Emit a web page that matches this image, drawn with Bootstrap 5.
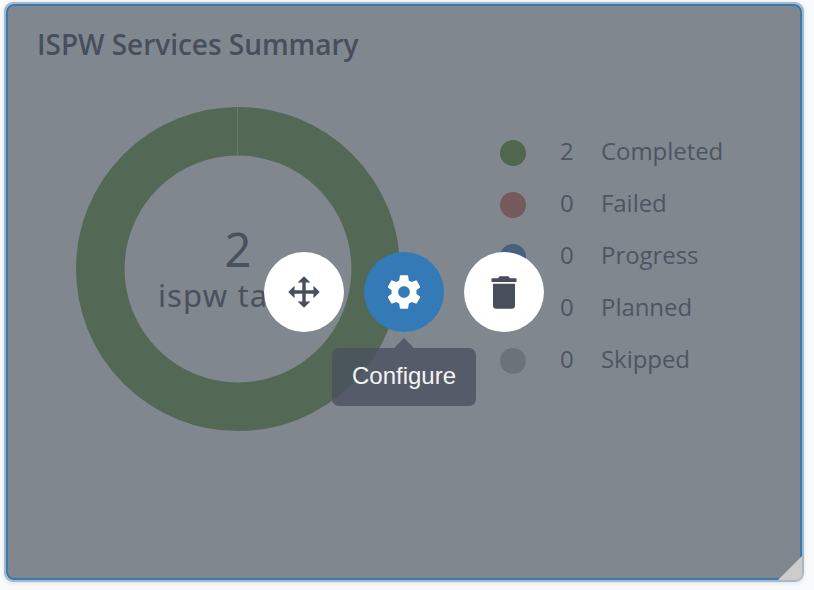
<!DOCTYPE html>
<html lang="en">
<head>
<meta charset="utf-8">
<meta name="viewport" content="width=device-width, initial-scale=1">
<title>ISPW Services Summary</title>
<link href="https://cdn.jsdelivr.net/npm/bootstrap@5.3.0/dist/css/bootstrap.min.css" rel="stylesheet">
<style>
body{background:#f8fafc;font-family:"Open Sans",sans-serif;color:#4e5562;height:590px;overflow:hidden}
.widget{width:800px;height:580px;margin:2px 0 0 4px;border:2px solid #aab7c2;border-radius:9px;background:#d5dce3;box-shadow:0 1px 4px rgba(60,80,100,.15)}
.widget-inner{height:576px;border:2px solid #337ab7;border-radius:8px;background:#81878f}
.widget-title{font-size:28px;font-weight:600;line-height:38px;letter-spacing:-.03px;color:#484e5b;padding:19px 0 0 29px}
.chart{width:324px;height:324px;margin:44px 0 0 68px}
.chart-text{padding-bottom:4px}
.chart-number{font-family:"Noto Sans",sans-serif;font-size:47px;line-height:56px;color:#4a505d}
.chart-label{font-family:"Noto Sans",sans-serif;font-size:31px;line-height:36px;letter-spacing:1.15px;color:#4a505d}
.legend-list{margin:62px 0 0 100px;font-size:24px}
.legend-item{height:52px}
.dot{width:26px;height:26px;margin-top:4px}
.count{width:14px;margin-left:34px}
.label{margin-left:27px;letter-spacing:-.05px}
.actions{left:258px;top:248px;gap:20px}
.action{width:80px;height:80px;background:#fff;color:#484e5b}
.action.primary{background:#337ab7;color:#fff}
.tip{left:326px;top:334px;width:144px}
.tip-arrow{width:20px;height:10px;background:rgba(74,80,94,.8);clip-path:polygon(50% 0,100% 100%,0 100%)}
.tip-body{width:144px;height:58px;border-radius:7px;background:rgba(74,80,94,.8);color:#f4f4f5;font:24px/56px "Liberation Sans",Arial,sans-serif}
.grip{right:0;bottom:0;width:24px;height:24px;background:#ccc;clip-path:polygon(100% 0,100% 100%,0 100%);border-bottom-right-radius:6px}
</style>
</head>
<body>
<div class="widget position-relative">
  <div class="widget-inner">
    <h1 class="widget-title m-0">ISPW Services Summary</h1>
    <div class="d-flex">
      <div class="chart position-relative flex-shrink-0">
        <svg class="d-block" width="324" height="324" viewBox="0 0 324 324">
          <circle cx="162" cy="162" r="137.7" fill="none" stroke="#536956" stroke-width="48.6"/>
          <path d="M161.5 0v48.6" stroke="#6b7a70" stroke-width="1"/>
        </svg>
        <div class="chart-text position-absolute top-0 start-0 w-100 h-100 d-flex flex-column align-items-center justify-content-center text-nowrap">
          <div class="chart-number">2</div>
          <div class="chart-label">ispw tasks</div>
        </div>
      </div>
      <div class="legend-list">
        <div class="legend-item d-flex align-items-center"><span class="dot rounded-circle" style="background:#50674d"></span><span class="count">2</span><span class="label">Completed</span></div>
        <div class="legend-item d-flex align-items-center"><span class="dot rounded-circle" style="background:#76595c"></span><span class="count">0</span><span class="label">Failed</span></div>
        <div class="legend-item d-flex align-items-center"><span class="dot rounded-circle" style="background:#466080"></span><span class="count">0</span><span class="label">Progress</span></div>
        <div class="legend-item d-flex align-items-center"><span class="dot rounded-circle" style="background:#858a90"></span><span class="count">0</span><span class="label">Planned</span></div>
        <div class="legend-item d-flex align-items-center"><span class="dot rounded-circle" style="background:#6c7279"></span><span class="count">0</span><span class="label">Skipped</span></div>
      </div>
    </div>
  </div>
  <div class="actions position-absolute d-flex">
    <button class="action border-0 p-0 rounded-circle d-flex align-items-center justify-content-center" aria-label="Move">
      <svg width="32" height="32" viewBox="0 0 32 32" fill="currentColor"><path d="M16 .3l6.400 6.200h-4.700v7.800h7.800V9.800L31.700 16l-6.200 6.200v-4.500h-7.800v7.800h4.700L16 31.700l-6.400-6.200h4.700v-7.800H6.500v4.500L.3 16l6.200-6.200v4.500h7.800V6.500H9.600z"/></svg>
    </button>
    <button class="action primary border-0 p-0 rounded-circle d-flex align-items-center justify-content-center" aria-label="Configure">
      <svg width="40" height="40" viewBox="0 0 24 24" fill="currentColor"><path d="M19.430 12.980c.04-.32.07-.64.07-.98s-.03-.66-.07-.98l2.110-1.650c.19-.15.24-.42.12-.64l-2-3.460c-.12-.22-.39-.3-.61-.22l-2.490 1c-.52-.4-1.080-.73-1.690-.98l-.38-2.650C14.460 2.180 14.250 2 14 2h-4c-.25 0-.46.18-.49.42l-.38 2.650c-.61.25-1.170.59-1.690.98l-2.490-1c-.23-.09-.49 0-.61.22l-2 3.460c-.13.22-.07.49.12.64l2.110 1.650c-.04.32-.07.65-.07.98s.03.66.07.98l-2.110 1.650c-.19.15-.24.42-.12.64l2 3.460c.12.22.39.3.61.22l2.490-1c.52.4 1.080.73 1.690.98l.38 2.650c.03.24.24.42.49.42h4c.25 0 .46-.18.49-.42l.38-2.650c.61-.25 1.170-.59 1.690-.98l2.490 1c.23.09.49 0 .61-.22l2-3.460c.12-.22.07-.49-.12-.64l-2.110-1.650zM12 15.500c-1.930 0-3.500-1.570-3.500-3.500s1.570-3.500 3.500-3.500 3.500 1.570 3.500 3.500-1.570 3.500-3.500 3.500z"/></svg>
    </button>
    <button class="action border-0 p-0 rounded-circle d-flex align-items-center justify-content-center" aria-label="Delete">
      <svg width="32" height="34" viewBox="0 0 32 34" fill="currentColor"><path d="M3.500 3.300h6.500l1.500-2h9l1.500 2h6.500V7h-25zM5 8.800h22v21.700a3.200 3.200 0 0 1-3.200 3.200H8.200A3.200 3.200 0 0 1 5 30.500z"/></svg>
    </button>
  </div>
  <div class="tip position-absolute d-flex flex-column align-items-center" role="tooltip">
    <div class="tip-arrow"></div>
    <div class="tip-body text-center">Configure</div>
  </div>
  <div class="grip position-absolute"></div>
</div>
<script src="https://cdn.jsdelivr.net/npm/bootstrap@5.3.0/dist/js/bootstrap.bundle.min.js"></script>
</body>
</html>
